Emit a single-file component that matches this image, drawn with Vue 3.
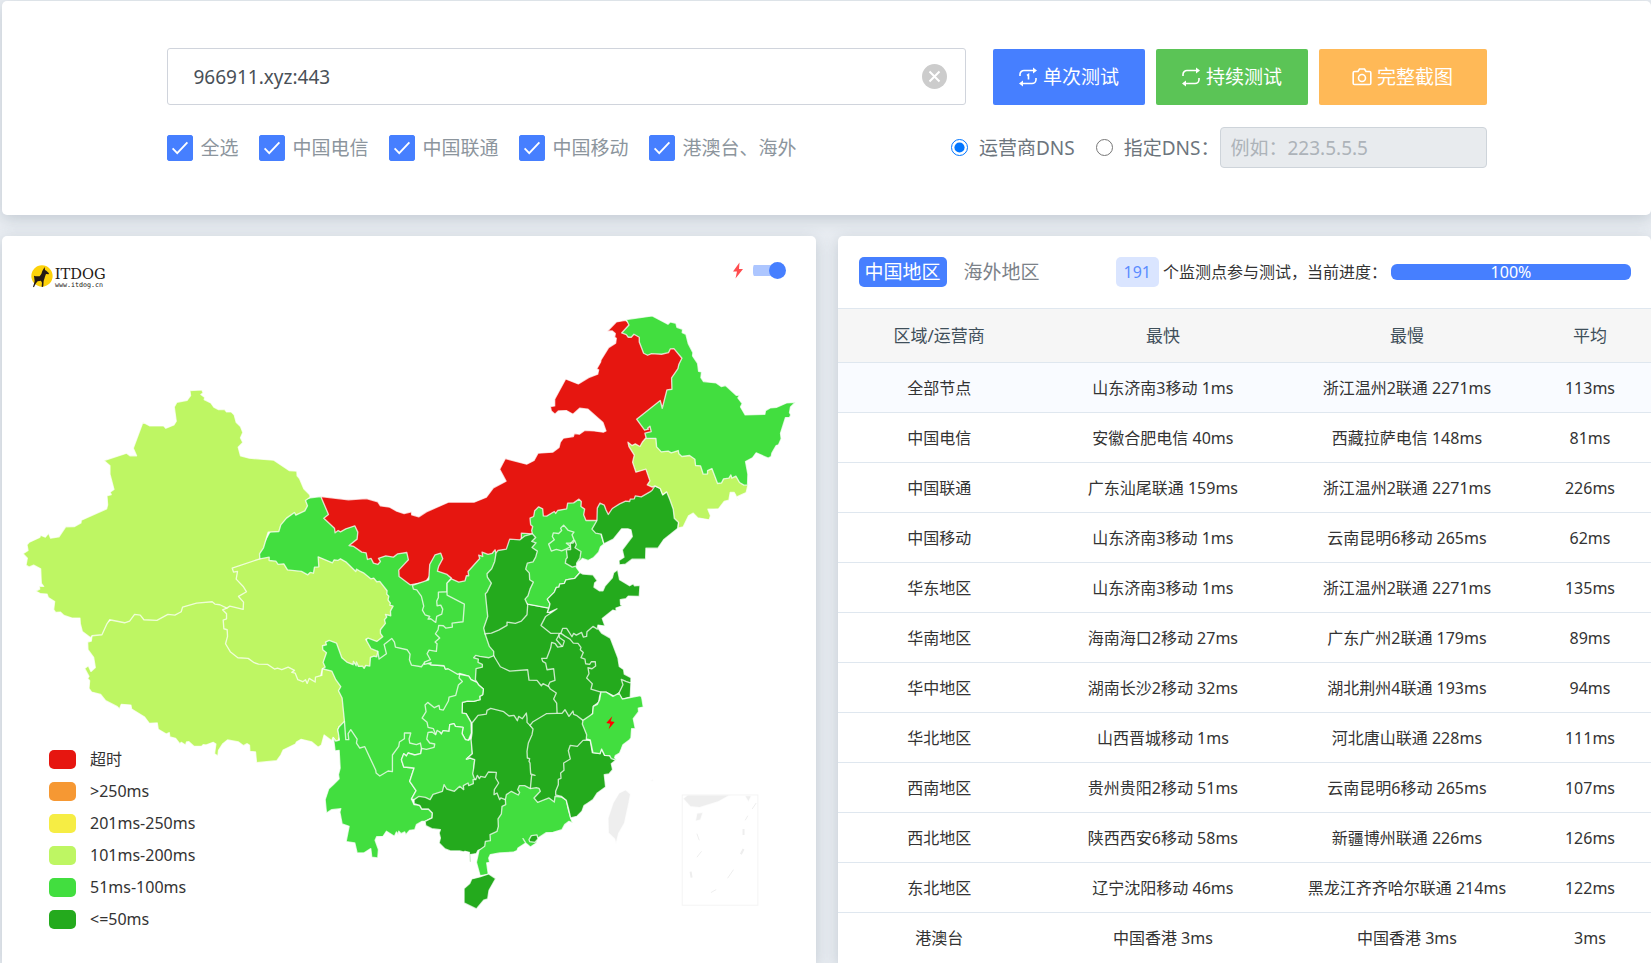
<script setup>
import { ref } from 'vue'

const target = ref('966911.xyz:443')
const dnsMode = ref('isp')
const customDns = ref('')
const flash = ref(true)
const checks = ref([
  { label: '全选', on: true },
  { label: '中国电信', on: true },
  { label: '中国联通', on: true },
  { label: '中国移动', on: true },
  { label: '港澳台、海外', on: true }
])

const rows = [
  ['全部节点', '山东济南3移动 1ms', '浙江温州2联通 2271ms', '113ms'],
  ['中国电信', '安徽合肥电信 40ms', '西藏拉萨电信 148ms', '81ms'],
  ['中国联通', '广东汕尾联通 159ms', '浙江温州2联通 2271ms', '226ms'],
  ['中国移动', '山东济南3移动 1ms', '云南昆明6移动 265ms', '62ms'],
  ['华东地区', '山东济南3移动 1ms', '浙江温州2联通 2271ms', '135ms'],
  ['华南地区', '海南海口2移动 27ms', '广东广州2联通 179ms', '89ms'],
  ['华中地区', '湖南长沙2移动 32ms', '湖北荆州4联通 193ms', '94ms'],
  ['华北地区', '山西晋城移动 1ms', '河北唐山联通 228ms', '111ms'],
  ['西南地区', '贵州贵阳2移动 51ms', '云南昆明6移动 265ms', '107ms'],
  ['西北地区', '陕西西安6移动 58ms', '新疆博州联通 226ms', '126ms'],
  ['东北地区', '辽宁沈阳移动 46ms', '黑龙江齐齐哈尔联通 214ms', '122ms'],
  ['港澳台', '中国香港 3ms', '中国香港 3ms', '3ms']
]

const legend = [
  { cls: 'timeout', label: '超时' },
  { cls: 'l250', label: '>250ms' },
  { cls: 'l200', label: '201ms-250ms' },
  { cls: 'l100', label: '101ms-200ms' },
  { cls: 'l50', label: '51ms-100ms' },
  { cls: 'l0', label: '<=50ms' }
]

// Origin of each map sheet; outlines are stored relative to their sheet.
const sheets = {
  A: [0, 690],
  B: [1200, 900],
  C: [0, 1440],
  D: [1200, 1500],
  E: [900, 2040],
  F: [1920, 1950]
}

// Later provinces are painted over earlier ones, so a shared border is traced once.
const regions = [
  ['内蒙古', 'timeout', [
    ['C', '963,50 1046,60 1100,56 1134,66 1142,78 1170,82 1191,94 1213,101 1235,96 1236,105'],
    ['B', '57,651 80,636 146,607 223,607 260,592 281,564 319,544 300,508 317,476 381,493 403,482 415,460 459,457 478,443 482,427 491,415 521,410 524,401 539,403 556,391 584,393 611,397 619,393 610,368 565,328 540,325 520,343 500,332 476,333 466,343 455,333 452,320 465,318 465,298 498,237 536,252 567,233 594,223 597,210 591,207 603,186 604,180 627,143 648,130 650,115 645,112 647,101 638,93 623,94 650,66 677,61 700,75 740,120 830,130 860,170 830,260 800,330 760,380 780,420 740,450 780,570 740,620 650,660 560,680 400,740 280,780'],
    ['D', '200,265 100,215 60,270 30,290'],
    ['C', '1220,340 1180,300 1100,270 1040,220 990,180 950,100']]],
  ['甘肃', 'l50', [
    ['C', '963,50 986,104 972,115 1004,145 1006,159 1015,152 1022,156 1038,147 1065,138 1074,157 1072,178 1048,197 1062,200 1086,217 1099,219 1103,239 1114,236 1121,250 1134,254 1142,245 1136,236 1158,228 1181,232 1194,222 1221,218 1226,240 1197,271 1198,290 1231,315'],
    ['D', '60,250 150,270 220,300 220,380 150,400 120,480 60,520 0,520'],
    ['C', '1150,560 1100,560 1100,480 1120,330 950,310 780,265 770,230 830,120 900,60 931,54']]],
  ['四川', 'l50', [
    ['C', '1134,515 1138,538 1160,522 1153,494 1176,476 1184,487 1187,502 1222,510 1231,523 1229,540 1235,556'],
    ['D', '65,501 75,488 95,495 133,498 137,508 145,505 180,524 200,560 180,620 150,650 130,700'],
    ['E', '440,165 400,215 350,220 300,250 285,290 230,300 150,220 130,180 110,100 100,0'],
    ['C', '960,560 950,500 1000,470 1050,480 1080,530']]],
  ['青海', 'l100', [
    ['C', '780,237 808,232 808,242 828,244 835,254 852,252 863,270 905,275 924,285 931,278 941,280 944,262 957,261 955,231 998,249 1003,240 1014,242 1022,237 1038,246 1068,275 1070,268 1082,275 1091,279 1113,297 1122,295 1131,306 1140,305 1162,333 1161,343 1167,349 1165,361 1172,370 1170,376 1180,379 1172,394 1173,408 1157,404 1161,412 1154,420 1157,431 1142,450 1142,461 1149,471 1131,485 1105,475 1098,479 1114,507 1134,515 1131,531 1122,529 1112,533 1110,559 1098,557 1093,566 1088,559 1076,560 1070,547 1069,558 1061,545 1060,555 1041,547 1026,534 1010,490 988,482 977,487 980,495 968,498 969,510 980,519 970,548 976,562 968,567 960,600 920,640 850,590 700,560 650,480 650,380 680,300 685,240 760,220']]],
  ['西藏', 'l100', [
    ['C', '276,468 300,440 400,380 600,340 650,350 681,385 668,390 680,402 680,417 670,421 672,447 682,450 683,470 677,492 692,517 714,534 745,536 763,549 776,553 803,554 824,568 833,565 846,570 865,562 884,572 876,578 886,580 894,600 909,606 917,600 922,611 928,596 946,607 947,592 966,587 968,567 996,574 1008,600 1023,621 1016,633 1027,655 1034,725 1028,739 1018,741 1014,750 1019,770 1016,781 1008,784 1000,773 996,783 973,766 965,796 955,803 936,787 904,779 890,787 887,793 850,811 843,826 831,843 770,849 767,817 750,815 749,797 742,792 731,798 716,787 683,781 669,792 656,812 654,829 644,822 648,793 640,788 618,796 610,795 605,800 582,800 567,786 560,787 557,796 544,788 540,793 527,776 510,772 508,759 499,763 475,749 472,730 448,731 434,712 395,688 393,676 364,674 359,688 352,681 317,663 302,644 275,637 267,626 269,603 263,596 267,590 254,566 265,558 273,575 286,563 281,533 264,510 263,487 274,484']]],
  ['新疆', 'l100', [
    ['A', '570,482 606,480 610,489 603,494 615,503 613,509 633,519 642,532 656,539 674,538 680,546 694,546 703,555 709,577 722,590 729,608 722,624 729,638 715,652 722,678 748,685 822,691 868,722 891,724 892,738 899,746 912,777 930,795'],
    ['C', '931,52 917,62 923,78 915,93 888,106 884,98 860,115 843,135 837,155 805,157 791,204 779,222 780,237 697,265 701,277 713,275 709,298 730,320 740,336 716,350 731,367 730,389 690,379 681,385 660,375 645,373 637,366 590,370 548,382 544,396 525,406 504,404 471,422 432,420 421,406 404,404 389,424 374,429 329,420 321,432 306,465 276,468 272,474 247,455 241,432 240,415 216,415 192,407 181,397 167,398 161,390 164,365 145,353 141,343 122,342 107,334 119,328 118,319 131,320 124,311 122,267 101,256 87,262 78,256 82,235 69,222 84,212 81,195 88,187 119,173 122,166 136,172 146,160 152,175 177,171 197,141 224,140 243,129 244,121 320,87 323,75 321,48 334,44 330,37 342,29'],
    ['A', '330,733 330,708 312,692 380,670 391,678 410,678 400,655 429,577 450,588 491,588 498,595 522,585 529,574 523,531 531,517 562,511 572,497']]],
  ['宁夏', 'l50', [
    ['D', '38,257 87,240 90,194 106,165 123,160 129,177 117,199 113,214 142,224 155,235 142,250 142,276 116,277 116,293 111,304 112,318 123,316 129,328 126,343 111,350 108,368 93,357 85,358 90,350 76,345 68,331 72,319 65,290 51,270 41,268']]],
  ['陕西', 'l50', [
    ['D', '155,237 177,247 196,243 200,228 207,228 205,215 240,176 237,166 249,170 247,157 265,164 277,161 286,150 289,160 310,250 300,390 290,440 300,490 260,500 240,560 232,548 214,540 207,529 180,521 174,524 145,507 137,508 133,498 92,495 94,489 74,494 74,487 92,480 82,462 88,451 110,455 112,432 106,427 120,415 113,408 107,402 115,390 117,377 131,378 138,385 158,382 157,370 190,366 194,313 142,286 142,250']]],
  ['河南', 'l0', [
    ['D', '256,402 270,380 340,340 384,313 448,325 443,338 480,340 490,420 500,480 470,570 430,580 300,530 282,468 282,455 269,440']]],
  ['河北', 'l50', [
    ['D', '398,102 396,92 399,80 393,75 391,55 402,50 405,33 417,21 429,27 431,48 441,49 464,35 468,41 474,32 501,27 504,10 522,9 538,-2 545,5 544,20 555,28 552,45 559,62 592,62 600,90 613,133 603,141 597,157 582,173 565,182 548,176 545,180 531,190 530,203 541,218 525,236 499,240 494,251 480,253 478,262 470,263 464,277 443,298 451,312 448,325 384,313 365,300 365,100']]],
  ['北京', 'l50', [
    ['D', '492,76 506,92 523,97 517,105 523,120 514,130 500,130 513,140 500,147 486,153 470,149 455,154 447,133 464,120 458,110 461,99 477,101 486,92 483,85']]],
  ['天津', 'l0', [
    ['D', '525,122 530,135 526,144 544,155 541,175 531,190 531,198 518,202 497,190 499,178 503,173 500,150 513,149 512,130 520,130']]],
  ['山西', 'l0', [
    ['D', '289,160 285,185 276,207 262,222 263,232 275,250 262,277 257,282 264,350 252,385 256,402 275,400 297,391 322,377 322,367 347,371 365,364 382,345 384,316 376,298 385,288 391,268 401,247 390,240 389,220 378,208 383,190 400,186 408,172 413,154 397,143 409,129 396,125 408,113 398,102 376,108 361,120 330,118 320,148 295,152']]],
  ['辽宁', 'l0', [
    ['B', '592,662 593,625 601,610 614,616 619,630 626,644 638,626 660,612 678,604 690,605 692,598 704,597 707,588 725,591 751,576 757,572 766,558 782,566 790,585 802,575 830,600 840,640 837,670 835,685 792,720 775,745 739,745 738,778 698,778 678,793 659,795 658,782 673,772 668,750 698,710 694,690 685,687 666,687 641,718 613,732 605,703 588,700 577,688']]],
  ['吉林', 'l100', [
    ['B', '685,427 697,437 707,432 721,440 728,427 738,415 768,415 800,430 900,440 960,520 1030,520 1046,553 1040,578 1010,592 1020,601 1013,597 1008,585 1004,578 992,578 988,601 974,605 957,627 925,628 933,648 929,660 894,654 881,640 867,648 851,681 835,685 837,668 824,655 821,628 811,600 801,576 789,585 782,566 766,558 758,562 743,555 751,543 739,508 709,517 699,487 704,466 688,440']]],
  ['黑龙江', 'l50', [
    ['B', '680,59 758,48 805,73 812,66 829,70 832,82 849,88 848,98 859,103 866,131 880,158 879,168 894,190 897,214 906,216 904,233 912,245 950,249 965,260 978,257 1010,286 1020,286 1015,294 1028,311 1023,321 1037,345 1096,343 1098,332 1112,324 1132,322 1161,309 1188,307 1173,321 1170,338 1174,345 1170,353 1158,353 1143,400 1145,417 1137,435 1130,437 1117,460 1115,470 1106,475 1070,459 1059,474 1038,485 1045,523 1044,556 1033,556 1020,548 1009,529 997,535 994,525 988,535 972,537 966,549 954,551 937,506 924,512 924,522 911,523 903,498 888,497 886,478 870,467 847,470 838,462 836,452 815,459 806,454 785,456 771,441 769,416 740,415 736,400 755,395 751,379 744,385 747,388 735,391 711,358 782,302 788,325 802,270 817,268 816,234 835,206 838,193 847,175 823,146 812,147 807,158 786,163 756,161 744,166 732,160 719,126 719,112 703,103 695,112 686,112 680,104 666,99 688,75']]],
  ['江苏', 'l0', [
    ['D', '480,402 490,370 590,365 597,388 606,400 632,415 655,475 659,500 672,509 674,523 694,534 694,548 670,570 658,580 646,591 640,588 619,577 604,577 560,590 540,500 470,420']]],
  ['山东', 'l0', [
    ['D', '541,218 550,223 580,225 593,243 585,250 583,262 599,273 610,273 616,259 638,234 642,219 654,210 660,240 690,258 701,252 705,258 721,257 719,290 686,289 679,297 662,300 663,315 668,318 649,325 650,334 640,331 608,356 616,379 595,376 593,388 580,380 562,396 561,410 551,412 546,398 530,406 522,401 517,411 501,386 489,386 484,400 454,401 424,377 438,350 472,327 450,337 443,338 448,325 451,312 443,298 464,277 470,263 478,262 480,253 494,251 499,240 525,236']]],
  ['湖北', 'l0', [
    ['D', '282,468 268,474 240,470 228,467 222,474 236,478 235,488 248,494 248,502 229,507 227,540 232,548 237,556 251,568 249,585 240,590 241,600 222,605 204,604 188,608 187,640 199,642 214,668 240,700 400,700 473,660 490,620 480,570 446,560 430,552 425,558 412,542 388,541 384,510 330,514 302,501']]],
  ['安徽', 'l0', [
    ['D', '484,401 497,410 511,418 521,430 535,431 544,443 542,450 551,458 544,474 556,478 558,492 570,494 575,486 587,486 588,499 577,507 565,504 568,522 561,535 571,545 578,552 574,568 604,577 600,590 597,608 581,620 579,640 554,680 473,660 471,610 462,598 470,580 452,568 446,558 451,547 466,542 462,507 442,510 438,490 429,485 426,476 441,476 453,445 456,428 467,432 474,442 489,440 494,424 479,413 478,403']]],
  ['上海', 'l0', [['D', '665,539 679,545 694,550 692,592 668,598 657,582 670,555']]],
  ['重庆', 'l50', [
    ['D', '180,524 207,529 214,540 232,548 237,556 251,568 249,585 240,590 241,600 222,605 204,604 188,608 187,640 199,642 214,668 215,700 206,722 197,720 187,702 190,683 167,680 163,672 150,675 148,695 130,693 125,703 120,697 108,705 101,687 85,683 82,668 67,655 79,636 76,616 84,608 104,624 118,617 120,629 131,631 146,604 148,592 168,587 176,556 188,545 178,535']]],
  ['云南', 'l50', [
    ['E', '138,180 147,180 145,162 153,150 172,178 170,190 180,205 195,201 228,272 229,280 240,289 265,274 278,276 278,226 297,200 299,187 314,177 314,160 333,160 328,178 330,190 350,195 362,190 365,205 363,222 345,226 325,220 320,229 312,222 305,240 312,262 343,265 330,305 349,333 335,358 343,375 360,377 366,388 386,388 398,400 397,415 376,425 367,425 350,435 345,450 330,452 318,465 315,457 304,462 297,455 295,465 290,457 284,470 260,455 250,470 231,471 226,482 236,510 234,535 216,533 213,507 192,520 172,520 165,490 139,486 148,440 127,433 120,397 123,387 96,390 80,400 76,360 87,327 100,315 118,297 116,285 121,265 118,212 106,214 101,175 108,184 119,181 114,150 118,141 134,125']]],
  ['贵州', 'l50', [
    ['E', '305,240 312,222 320,229 325,220 345,226 363,222 366,206 380,209 403,203 405,193 390,190 381,178 385,158 397,157 408,165 412,152 420,157 425,163 430,153 448,155 450,135 463,132 467,140 490,143 487,162 497,180 506,182 515,175 518,222 500,238 512,235 525,240 522,265 530,300 521,330 440,360 391,370 343,360 335,358 349,333 330,305 343,265 312,262']]],
  ['湖南', 'l0', [
    ['E', '517,130 535,107 560,103 562,92 573,86 612,96 628,109 643,107 653,123 657,110 668,117 680,100 682,115 682,128 691,137 710,150 710,320 692,340 640,370 603,370 560,320 524,297 519,282 522,265 525,240 512,235 500,238 518,222 514,180 517,160']]],
  ['江西', 'l0', [
    ['E', '691,137 700,126 740,102 773,101 787,101 796,90 808,110 820,94 822,104 832,108 850,122 870,150 862,178 850,210 820,260 800,340 766,370 740,380 690,360 692,327 696,285 706,287 693,283 691,250 688,245 690,237 683,235 682,215 686,190 697,165 700,148']]],
  ['广西', 'l0', [
    ['E', '343,360 358,350 377,353 391,360 400,344 428,335 433,315 441,328 464,335 480,320 492,330 491,318 505,310 507,318 521,312 520,300 528,300 533,287 539,297 543,290 556,293 566,277 590,278 588,295 597,310 584,330 583,345 592,340 600,360 603,355 617,360 640,390 620,450 580,500 535,512 530,522 512,525 514,548 510,545 509,518 496,515 491,517 480,514 452,514 436,508 418,490 422,475 418,460 422,450 396,447 378,438 376,425 397,415 398,400 386,388 366,388 360,377 343,372']]],
  ['广东', 'l50', [
    ['E', '617,360 620,345 635,335 656,346 660,338 654,330 659,318 675,318 692,327 710,324 718,326 722,335 703,355 714,368 748,355 764,367 766,350 785,352 800,362 806,390 814,418 819,430 808,425 795,435 787,450 760,458 740,459 715,475 710,490 692,502 678,490 670,477 678,490 655,505 652,513 640,518 600,520 572,525 567,535 570,548 561,550 566,585 541,588 530,548 538,512 555,500 557,485 572,483 571,465 592,455 596,440 595,418 605,403 607,380 618,375']]],
  ['福建', 'l0', [
    ['E', '862,181 872,183 878,219 901,222 906,208 915,227 930,228 948,242 935,252 939,270 928,283 914,285 918,322 893,340 880,360 865,370 853,378 847,395 832,410 813,415 806,385 800,362 785,350 768,346 768,335 776,315 776,299 784,296 783,280 793,272 792,250 812,238 806,213 812,197 833,200 850,182']]],
  ['浙江', 'l50', [
    ['D', '604,577 619,577 640,590 658,580 668,598 722,588 726,592 728,603 731,622 716,625 717,636 701,657 707,687 696,687 694,715'],
    ['E', '990,180 970,195 965,208 960,220 947,228 945,234 951,242 935,237 930,228 915,227 906,208 901,222 880,219 872,181 860,178 861,165 855,150 848,133 850,122 879,102 881,80 893,74 900,60']]],
  ['海南', 'l0', [['E', '567,583 588,597 568,632 564,658 552,662 530,688 493,670 493,627 510,612 516,598 540,592']]],
  ['香港', 'l0', [['E', '688,480 695,468 712,466 715,478 706,488 690,486']]],
  ['台湾', 'blank', [['E', '978,330 993,343 988,370 975,430 957,462 949,495 945,478 926,460 925,415 940,370 958,340']]],
  ['钓鱼岛', 'blank', [['E', '1051,304 1060,298 1062,305']]],
  ['南海北岸', 'blank', [['F', '144,435 275,435 235,457 180,474 152,471 130,447']]],
  ['吕宋', 'blank', [['F', '315,438 336,438 327,458']]],
  ['西沙', 'blank', [['F', '172,490 191,488 183,511 167,515']]]
]

const provinces = regions.map(([name, level, parts]) => ({
  name,
  level,
  points: parts
    .map(([sheet, list]) =>
      list
        .split(' ')
        .map((pair) => {
          const [x, y] = pair.split(',').map(Number)
          return x + sheets[sheet][0] + ',' + (y + sheets[sheet][1])
        })
        .join(' ')
    )
    .join(' ')
}))
</script>

<template>
  <div class="page">
    <section class="card search">
      <form class="form" @submit.prevent>
        <div class="line top">
          <div class="target">
            <input v-model="target" type="text" aria-label="测试地址" />
            <button type="button" class="clear" aria-label="清空" @click="target = ''">
              <svg viewBox="0 0 25 25"><path d="M7.500 7.500l10 10M17.500 7.500l-10 10" /></svg>
            </button>
          </div>
          <div class="actions">
            <button type="submit" class="btn blue">
              <svg class="ico" viewBox="0 0 20 20">
                <path d="M2 9V7.500a4 4 0 0 1 4-4h11M18 11v1.500a4 4 0 0 1-4 4H3M9 8.500l1.500-1v5" />
                <path class="solid" d="M15 .500l4 3-4 3zM5 13.500l-4 3 4 3z" />
              </svg>
              <span>单次测试</span>
            </button>
            <button type="button" class="btn green">
              <svg class="ico" viewBox="0 0 20 20">
                <path d="M2 9V7.500a4 4 0 0 1 4-4h11M18 11v1.500a4 4 0 0 1-4 4H3" />
                <path class="solid" d="M15 .500l4 3-4 3zM5 13.500l-4 3 4 3z" />
              </svg>
              <span>持续测试</span>
            </button>
            <button type="button" class="btn orange">
              <svg class="ico" viewBox="0 0 20 20">
                <path d="M2.500 4.500h3.500l1.500-2.500h5l1.500 2.500h3.500a1.300 1.300 0 0 1 1.300 1.300v10.400a1.300 1.300 0 0 1-1.300 1.300h-15a1.300 1.300 0 0 1-1.300-1.300V5.800a1.300 1.300 0 0 1 1.300-1.300z" />
                <circle cx="10" cy="11" r="3.500" />
              </svg>
              <span>完整截图</span>
            </button>
          </div>
        </div>
        <div class="line bottom">
          <div class="checks">
            <label v-for="c in checks" :key="c.label" class="check">
              <input v-model="c.on" type="checkbox" />
              <span class="box"><svg viewBox="0 0 26 26"><path d="M5 13.500l5 5L21 7" /></svg></span>
              <span>{{ c.label }}</span>
            </label>
          </div>
          <div class="dns">
            <label class="radio"><input v-model="dnsMode" type="radio" name="dns" value="isp" />运营商DNS</label>
            <label class="radio"><input v-model="dnsMode" type="radio" name="dns" value="custom" />指定DNS：</label>
            <input v-model="customDns" class="custom" type="text" aria-label="指定DNS" placeholder="例如：223.5.5.5" :disabled="dnsMode === 'isp'" />
          </div>
        </div>
      </form>
    </section>

    <main class="columns">
      <section class="card map">
        <svg class="china" viewBox="6 708 2442 2181" role="img" aria-label="中国延迟地图">
          <g class="logo">
            <circle cx="126" cy="828" r="32" />
            <path d="M134 801l1 9 4 2 8 8-1 3-8-1-3 8-2 7-2 6-1 16-2 2-3-1 1-12-3-6-10 2-5 6-4 7-2 5-3-2 3-9 2-8-2-16 5 2 12 0 5-7 3-9z" />
            <text class="brand" x="164" y="836">ITDOG</text>
            <text class="site" x="165" y="862">www.itdog.cn</text>
          </g>
          <g class="provinces">
            <polygon v-for="p in provinces" :key="p.name" :class="p.level" :points="p.points" />
          </g>
          <path class="flash" d="M1838 2150l-18 20 12 2-5 17 18-22-12-2z" />
          <rect class="inset" x="2048" y="2386" width="227" height="331" />
          <path class="dashes" d="M2270 2410l-12 18M2245 2448l-8 14M2092 2502l7 20M2106 2555l-14 18M2202 2610l-18 26M2150 2670l-16 9" />
          <path class="dashes bold" d="M2232 2488v18M2232 2548l-8 16M2073 2616l3 18" />
        </svg>
        <label class="switch">
          <svg viewBox="0 0 10 16"><path d="M6.500 0L0 9h4L2.500 16 10 6.500H6z" /></svg>
          <input v-model="flash" type="checkbox" role="switch" aria-label="闪烁" />
        </label>
        <ul class="legend">
          <li v-for="l in legend" :key="l.cls"><i :class="l.cls"></i>{{ l.label }}</li>
        </ul>
      </section>

      <section class="card result">
        <header class="head">
          <button type="button" class="tab active">中国地区</button>
          <button type="button" class="tab">海外地区</button>
          <div class="status">
            <span class="count">191</span>
            <span class="note">个监测点参与测试，当前进度：</span>
            <div class="progress" role="progressbar" aria-valuenow="100">100%</div>
          </div>
        </header>
        <table>
          <thead>
            <tr><th class="c1">区域/运营商</th><th class="c2">最快</th><th class="c3">最慢</th><th class="c4">平均</th></tr>
          </thead>
          <tbody>
            <tr v-for="r in rows" :key="r[0]"><td v-for="(v, i) in r" :key="i">{{ v }}</td></tr>
          </tbody>
        </table>
      </section>
    </main>
  </div>
</template>

<style>
body {
  background: #e9edf2;
}
</style>

<style scoped>
.page {
  box-sizing: border-box;
  min-height: 100vh;
  padding: 1px 0 0 2px;
  display: flex;
  flex-direction: column;
  gap: 21px;
  overflow: hidden;
  font: 16px/24px "Noto Sans", "Noto Sans CJK SC", sans-serif;
  color: #333;
}
.page * {
  box-sizing: border-box;
}
.card {
  background: #fff;
  border-radius: 5px;
  box-shadow: 0 4px 16px rgba(70, 90, 110, 0.24);
}
button,
input {
  font: inherit;
  margin: 0;
}
button {
  border: 0;
  padding: 0;
  cursor: pointer;
}
.search {
  padding: 47px 24px;
}
.form {
  max-width: 1320px;
  margin: 0 auto;
  font-size: 19px;
}
.line {
  display: flex;
  justify-content: space-between;
}
.top {
  gap: 27px;
  align-items: flex-end;
  margin-bottom: 22px;
}
.target {
  position: relative;
  flex: 1;
}
.target input {
  display: block;
  width: 100%;
  height: 57px;
  padding: 0 60px 0 26px;
  border: 1px solid #d0d4dc;
  border-radius: 3px;
  color: #495057;
  outline: 0;
}
.clear {
  position: absolute;
  right: 19px;
  top: 16px;
  width: 25px;
  height: 25px;
  border-radius: 50%;
  background: #ccc;
}
.clear svg {
  display: block;
  fill: none;
  stroke: #fff;
  stroke-width: 2;
}
.actions {
  display: flex;
  gap: 11px;
}
.btn {
  display: flex;
  align-items: center;
  justify-content: center;
  gap: 5px;
  width: 152px;
  height: 56px;
  border-radius: 2px;
  color: #fff;
}
.blue {
  background: #467fff;
}
.green {
  background: #5bc456;
}
.orange {
  width: 168px;
  background: #ffb957;
}
.ico {
  width: 20px;
  height: 20px;
  fill: none;
  stroke: #fff;
  stroke-width: 1.6;
}
.ico .solid {
  fill: #fff;
  stroke: none;
}
.bottom {
  align-items: center;
}
.checks,
.dns {
  display: flex;
  align-items: center;
}
.checks {
  gap: 20px;
  color: #8c959d;
}
.check {
  position: relative;
  display: flex;
  align-items: center;
  gap: 8px;
}
.check input {
  position: absolute;
  opacity: 0;
}
.box {
  width: 26px;
  height: 26px;
  border: 1px solid #467fff;
  border-radius: 2px;
}
.box svg {
  display: none;
  background: #467fff;
  fill: none;
  stroke: #fff;
  stroke-width: 2;
}
.check input:checked + .box svg {
  display: block;
}
.radio {
  display: flex;
  align-items: center;
  color: #6c757d;
  margin-right: 21px;
}
.radio + .radio {
  margin-right: 0;
}
.radio input {
  width: 17px;
  height: 17px;
  margin-right: 11px;
  accent-color: #0075ff;
}
.custom {
  width: 267px;
  height: 41px;
  padding: 0 10px;
  border: 1px solid #ced4da;
  border-radius: 4px;
  background: #fff;
}
.custom:disabled {
  background: #e8ebee;
}
.custom::placeholder {
  color: #adb3b9;
}
.columns {
  flex: 1;
  display: grid;
  grid-template-columns: minmax(0, 1fr) minmax(0, 1fr);
  gap: 22px;
}
.columns .card {
  border-radius: 5px 5px 0 0;
}
.map {
  position: relative;
}
.china {
  display: block;
  width: 100%;
}
.provinces polygon {
  stroke: rgba(255, 255, 255, 0.75);
  stroke-width: 4;
  stroke-linejoin: round;
}
.timeout {
  fill: #e61610;
  background: #e61610;
}
.l250 {
  background: #f69833;
}
.l200 {
  background: #f6ed44;
}
.l100 {
  fill: #bef663;
  background: #bef663;
}
.l50 {
  fill: #42de3f;
  background: #42de3f;
}
.l0 {
  fill: #24aa1d;
  background: #24aa1d;
}
.blank {
  fill: #eee;
}
.flash {
  fill: #f00;
}
.inset {
  fill: none;
  stroke: #f4f4f4;
  stroke-width: 3;
}
.dashes {
  fill: none;
  stroke: #eee;
  stroke-width: 3;
}
.dashes.bold {
  stroke-width: 6;
}
.logo circle {
  fill: #fdd20a;
}
.logo {
  fill: #231815;
}
.brand {
  font: 44px "DejaVu Serif", serif;
}
.site {
  font: 20px "DejaVu Sans Mono", monospace;
}
.switch {
  position: absolute;
  right: 30px;
  top: 26px;
  display: flex;
  align-items: center;
  gap: 10px;
}
.switch svg {
  width: 10px;
  height: 17px;
  fill: #ff4d4f;
}
.switch input {
  appearance: none;
  position: relative;
  width: 33px;
  height: 17px;
  background: linear-gradient(#adc6ff, #adc6ff) 0 center / 28px 11px no-repeat;
  border-radius: 6px;
}
.switch input::before {
  content: "";
  position: absolute;
  left: 0;
  width: 17px;
  height: 17px;
  border-radius: 50%;
  background: #ccc;
}
.switch input:checked::before {
  left: 16px;
  background: #467fff;
}
.legend {
  position: absolute;
  left: 47px;
  bottom: 28px;
  margin: 0;
  padding: 0;
  list-style: none;
}
.legend li {
  display: flex;
  align-items: center;
  gap: 14px;
  height: 32px;
}
.legend i {
  width: 27px;
  height: 19px;
  border-radius: 5px;
}
.head {
  display: flex;
  align-items: center;
  height: 72px;
  padding: 0 20px 0 21px;
}
.tab {
  height: 30px;
  padding: 0 6px;
  margin-right: 11px;
  border-radius: 5px;
  font-size: 19px;
  line-height: 30px;
  color: #7b8188;
  background: none;
}
.tab.active {
  color: #fff;
  background: #467fff;
}
.status {
  display: flex;
  align-items: center;
  gap: 4px;
  margin-left: auto;
  white-space: nowrap;
}
.count {
  padding: 0 8px;
  line-height: 30px;
  border-radius: 5px;
  color: #5a8cff;
  background: #dae5ff;
}
.progress {
  width: 240px;
  height: 16px;
  border-radius: 6px;
  line-height: 16px;
  text-align: center;
  color: #fff;
  background: #467fff;
}
table {
  width: 100%;
  table-layout: fixed;
  border-collapse: collapse;
  text-align: center;
}
.c1 {
  width: 25%;
}
.c2,
.c3 {
  width: 30%;
}
.c4 {
  width: 15%;
}
th {
  height: 54px;
  padding: 0;
  font-size: 17px;
  font-weight: 400;
  color: #3f4f5a;
  background: #f6f6f6;
  border-top: 1px solid #dfe7ef;
}
td {
  height: 50px;
  padding: 0;
  border-top: 1px solid #dfe7ef;
}
tbody tr:first-child {
  background: #f9fbff;
}
</style>
